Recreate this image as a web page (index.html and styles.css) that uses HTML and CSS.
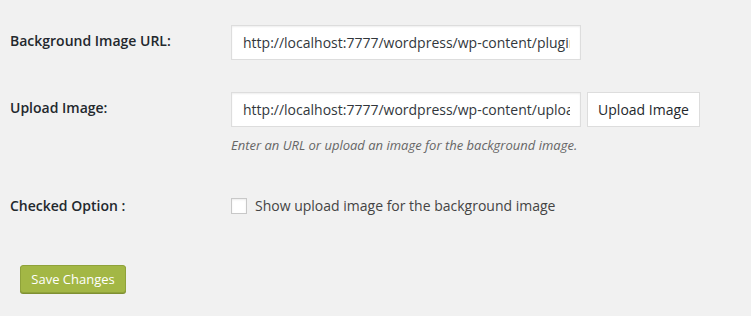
FILE: index.html
```html
<!DOCTYPE html>
<html lang="en">
<head>
<meta charset="utf-8">
<title>Settings</title>
<link rel="stylesheet" href="styles.css">
</head>
<body>
<div class="wrap">
  <form class="settings">
    <div class="form-grid">
      <div class="row">
        <label class="th" for="bg-url">Background Image URL:</label>
        <div class="td">
          <input id="bg-url" class="text-input" type="text" value="http://localhost:7777/wordpress/wp-content/plugins/wp-background/images/bg.jpg">
        </div>
      </div>
      <div class="row row-upload">
        <label class="th" for="upload">Upload Image:</label>
        <div class="td">
          <div class="field-line">
            <input id="upload" class="text-input" type="text" value="http://localhost:7777/wordpress/wp-content/uploads/2015/01/background.jpg">
            <button type="button" class="btn">Upload Image</button>
          </div>
          <p class="description">Enter an URL or upload an image for the background image.</p>
        </div>
      </div>
      <div class="row row-check">
        <div class="th">Checked Option :</div>
        <div class="td">
          <label class="check"><span class="box"></span>Show upload image for the background image</label>
        </div>
      </div>
    </div>
    <p class="submit"><button type="submit" class="btn-primary">Save Changes</button></p>
  </form>
</div>
<div class="footer-strip"></div>
</body>
</html>
```

FILE: styles.css
```css
html, body {
  margin: 0;
  padding: 0;
  background: #f1f1f1;
}
body {
  font-family: "Open Sans", "Liberation Sans", sans-serif;
  font-size: 14px;
  color: #23282d;
}
.wrap {
  height: 316px;
  padding: 0 0 0 10px;
  box-sizing: border-box;
  overflow: hidden;
}
.settings {
  margin: 0;
}
.form-grid {
  display: flex;
  flex-direction: column;
  padding-top: 25px;
}
.row {
  display: grid;
  grid-template-columns: 221px 1fr;
}
.th {
  font-weight: 600;
  font-size: 14px;
  line-height: 20px;
  padding-top: 6px;
  color: #23282d;
}
.td {
  display: flex;
  flex-direction: column;
}
.text-input {
  width: 350px;
  height: 35px;
  box-sizing: border-box;
  margin: 0;
  padding: 0 10px 0 11px;
  border: 1px solid #ddd;
  background: #fff;
  box-shadow: inset 0 1px 2px rgba(0,0,0,0.07);
  font-family: inherit;
  font-size: 14px;
  color: #32373c;
  outline: none;
}
.row-upload {
  margin-top: 32px;
}
.field-line {
  display: flex;
  gap: 6px;
}
.btn {
  height: 35px;
  box-sizing: border-box;
  padding: 0 10px;
  width: 113px;
  border: 1px solid #ddd;
  background: #fff;
  font-family: inherit;
  font-size: 14px;
  color: #23282d;
  cursor: pointer;
}
.description {
  margin: 8px 0 0 0;
  font-size: 13px;
  font-style: italic;
  line-height: 20px;
  color: #666;
}
.row-check {
  margin-top: 41px;
}
.row-check .th {
  padding-top: 0;
  line-height: 20px;
}
.check {
  display: flex;
  align-items: center;
  gap: 8px;
  line-height: 20px;
  color: #444;
}
.box {
  width: 16px;
  height: 16px;
  box-sizing: border-box;
  border: 1px solid #c8c8c8;
  background: #fff;
  box-shadow: inset 0 1px 2px rgba(0,0,0,0.08);
}
.submit {
  margin: 49px 0 0 10px;
  padding: 0;
}
.btn-primary {
  height: 28px;
  width: 106px;
  box-sizing: border-box;
  padding: 0 10px;
  border: 1px solid #8fa23a;
  border-radius: 3px;
  background: #a3b745;
  box-shadow: 0 1px 0 #7f9032;
  color: #fff;
  font-family: inherit;
  font-size: 13px;
  cursor: pointer;
}
.footer-strip {
  height: 6px;
  background: #fff;
}
```
